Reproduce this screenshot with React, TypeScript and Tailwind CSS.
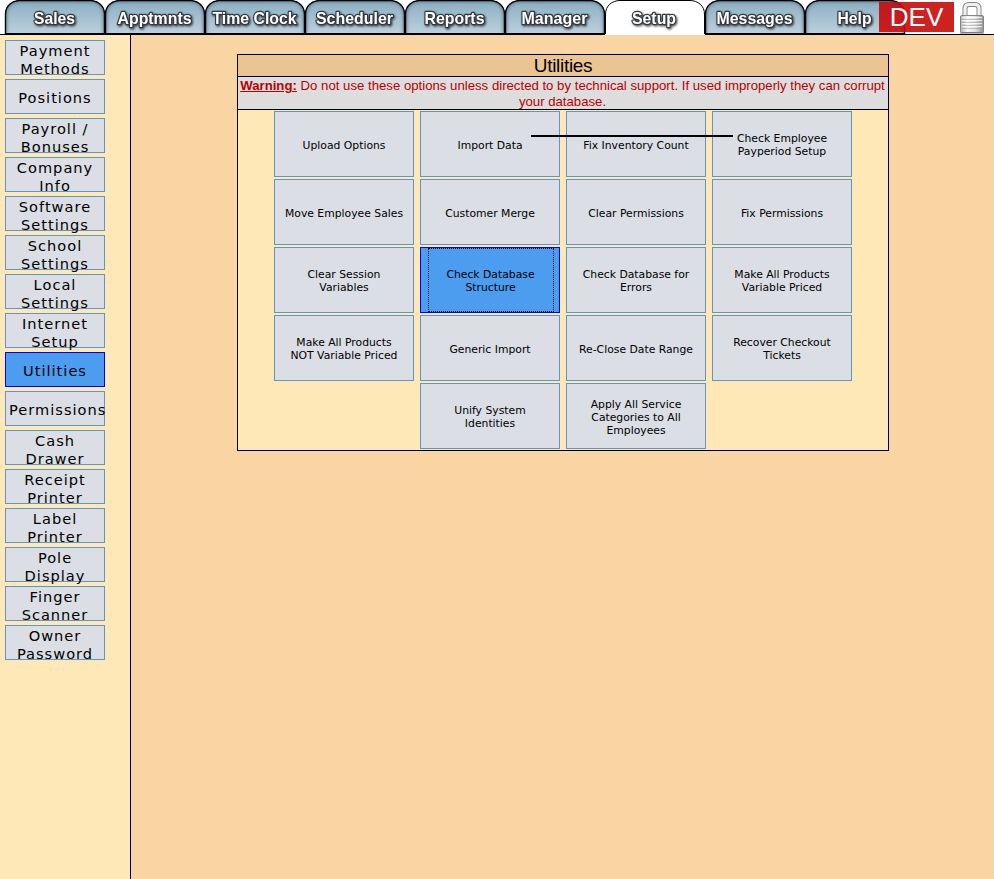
const tabs = ["Sales", "Apptmnts", "Time Clock", "Scheduler", "Reports", "Manager", "Setup", "Messages", "Help"];
const tabWidths = [41, 74, 84, 77, 60, 66, 44, 76, 34];

const side = [
  ["Payment", "Methods"], ["Positions"], ["Payroll /", "Bonuses"], ["Company", "Info"],
  ["Software", "Settings"], ["School", "Settings"], ["Local", "Settings"], ["Internet", "Setup"],
  ["Utilities"], ["Permissions"], ["Cash", "Drawer"], ["Receipt", "Printer"],
  ["Label", "Printer"], ["Pole", "Display"], ["Finger", "Scanner"], ["Owner", "Password"],
];

const rows = [
  [["Upload Options"], ["Import Data"], ["Fix Inventory Count"], ["Check Employee", "Payperiod Setup"]],
  [["Move Employee Sales"], ["Customer Merge"], ["Clear Permissions"], ["Fix Permissions"]],
  [["Clear Session", "Variables"], ["Check Database", "Structure"], ["Check Database for", "Errors"], ["Make All Products", "Variable Priced"]],
  [["Make All Products", "NOT Variable Priced"], ["Generic Import"], ["Re-Close Date Range"], ["Recover Checkout", "Tickets"]],
  [["Unify System", "Identities"], ["Apply All Service", "Categories to All", "Employees"]],
];

function Tab({ label, index }: { label: string; index: number }) {
  const active = label === "Setup";
  return (
    <svg width="100" height="35" viewBox="0 0 100 35" className="block shrink-0 overflow-visible">
      <defs>
        <linearGradient id="tabFill" x1="0" y1="0" x2="0" y2="1">
          <stop offset="0" stopColor="#8aafc2" />
          <stop offset="1" stopColor="#bdd0dd" />
        </linearGradient>
        <filter id="tabBlur" x="-20%" y="-20%" width="140%" height="140%">
          <feGaussianBlur stdDeviation="1.5" />
        </filter>
        <filter id="textShade" x="-20%" y="-50%" width="140%" height="200%">
          <feDropShadow dx="1" dy="1.2" stdDeviation="0.9" floodColor="#000" floodOpacity="0.7" />
        </filter>
        <clipPath id="tabClip">
          <path d="M0 34V14C0 6 7 .5 15 .5H85C93 .5 100 6 100 14V34Z" />
        </clipPath>
      </defs>
      <path d="M.5 34V14C.5 6 7 .5 15 .5H85C93 .5 99.5 6 99.5 14V34" fill={active ? "#fff" : "url(#tabFill)"} />
      {!active && (
        <path
          d="M.5 34V14C.5 6 7 .5 15 .5H85C93 .5 99.5 6 99.5 14V34"
          fill="none" stroke="#244255" strokeOpacity=".4" strokeWidth="4"
          filter="url(#tabBlur)" clipPath="url(#tabClip)"
        />
      )}
      <path d="M.5 34V14C.5 6 7 .5 15 .5H85C93 .5 99.5 6 99.5 14V34" fill="none" stroke="#000" strokeWidth={active ? 1 : 1.4} />
      {active ? <rect x="0" y="34" width="100" height="1" fill="#fff" /> : <rect x="0" y="33" width="100" height="2" fill="#000" />}
      <text
        x={active ? 49 : 49.5} y="23.5" textAnchor="middle" fontSize="16.3" fontWeight="700"
        fontFamily="'Liberation Sans', Arial, sans-serif" textLength={tabWidths[index]} lengthAdjust="spacingAndGlyphs"
        fill="#fff" stroke="#33383c" strokeWidth="2.4" strokeLinejoin="round" paintOrder="stroke" filter="url(#textShade)"
      >
        {label}
      </text>
    </svg>
  );
}

function Lock() {
  return (
    <svg width="26" height="33" viewBox="0 0 26 33" className="absolute left-[959px] top-[1px]">
      <defs>
        <linearGradient id="lockBody" x1="0" x2="1" y1="0" y2="0">
          <stop offset="0" stopColor="#b5b5b5" />
          <stop offset=".3" stopColor="#f8f8f8" />
          <stop offset=".65" stopColor="#e0e0e0" />
          <stop offset="1" stopColor="#949494" />
        </linearGradient>
      </defs>
      <path d="M6 16V7.500Q6 3.500 10 3.500H16Q20 3.500 20 7.500V16" fill="none" stroke="#858585" strokeWidth="5" />
      <path d="M6 16V7.500Q6 3.500 10 3.500H16Q20 3.500 20 7.500V16" fill="none" stroke="#efefef" strokeWidth="3.2" />
      <rect x="1.500" y="14.500" width="23" height="17" rx="1.500" fill="url(#lockBody)" stroke="#858585" />
      <path d="M3 18.500H23M3 21.500H23M3 24.500H23M3 27.500H23" stroke="#8d8d8d" strokeOpacity=".5" />
      <path d="M3 16.500H23M3 19.500H23M3 22.500H23M3 25.500H23" stroke="#fff" strokeOpacity=".7" />
      <path d="M1 32H25" stroke="#777" strokeWidth="1" />
    </svg>
  );
}

export default function App() {
  return (
    <div className="relative flex h-[879px] w-[994px] flex-col overflow-hidden bg-[#fad5a4] text-black">
      <header className="flex h-[35px] shrink-0 border-b border-black bg-white pl-[5px]">
        {tabs.map((t, i) => <Tab key={t} label={t} index={i} />)}
      </header>
      <div className="absolute left-[879px] top-[2px] h-[30px] w-[75px] bg-[#c80a0a]/90 text-center font-['Liberation_Sans',Arial,sans-serif] text-[26px] leading-[30px] text-white">
        DEV
      </div>
      <Lock />
      <div className="flex min-h-0 flex-1">
        <nav className="flex w-[131px] shrink-0 flex-col gap-1 border-r border-black bg-[#ffe8b7] pl-[5px] pt-[5px] font-['DejaVu_Sans',sans-serif] text-[14.6px] leading-[18px] tracking-[1px]">
          {side.map((lines) => (
            <button
              key={lines.join(" ")}
              className={`flex h-[35px] w-[100px] shrink-0 flex-col border whitespace-nowrap ${
                lines.length === 1 ? "justify-center pt-[3px]" : "justify-start pt-px"
              } ${lines[0] === "Permissions" ? "items-start pl-[3px]" : "items-center"} ${
                lines[0] === "Utilities" ? "border-[#0000ff] bg-[#4c9cf0]" : "border-[#5f96c3] bg-[#dbdee5]"
              }`}
            >
              {lines.map((l) => <span key={l} className="block h-[18px] shrink-0">{l}</span>)}
            </button>
          ))}
        </nav>
        <main className="flex-1 pl-[106px] pt-[19px]">
          <section className="w-[652px] border border-black bg-[#ffe8b7]">
            <h1 className="h-[22px] border-b border-black bg-[#ebc591] text-center font-['Liberation_Sans',Arial,sans-serif] text-[19px] leading-[21px] tracking-[-0.3px]">
              Utilities
            </h1>
            <p className="h-[33px] border-b border-black bg-[#dddddd] pt-px pr-px text-center font-['Liberation_Sans',Arial,sans-serif] text-[13.2px] leading-4 whitespace-nowrap text-[#bb0000]">
              <b className="underline">Warning:</b> Do not use these options unless directed to by technical support. If used improperly they can corrupt<br />your database.
            </p>
            <div className="relative flex flex-col gap-[2px] py-px font-['DejaVu_Sans',sans-serif] text-[10.8px] leading-[13px]">
              {rows.map((row, r) => (
                <div key={r} className="flex justify-center gap-[6px]">
                  {row.map((lines) => {
                    const active = lines[0] === "Check Database";
                    return (
                      <button
                        key={lines.join(" ")}
                        className={`flex h-[66px] w-[140px] justify-center border ${
                          active ? "border-[#0000ff] bg-[#4c9cf0] pl-px" : "border-[#5f96c3] bg-[#dbdee5]"
                        }`}
                      >
                        <span className={`flex h-full w-[126px] flex-col items-center justify-center pt-[2px] whitespace-nowrap ${active ? "border border-dotted border-black" : ""}`}>
                          {lines.map((l) => <span key={l} className="block">{l}</span>)}
                        </span>
                      </button>
                    );
                  })}
                </div>
              ))}
              <div className="absolute left-[293px] top-[25px] h-[2px] w-[202px] bg-black" />
            </div>
          </section>
        </main>
      </div>
    </div>
  );
}
